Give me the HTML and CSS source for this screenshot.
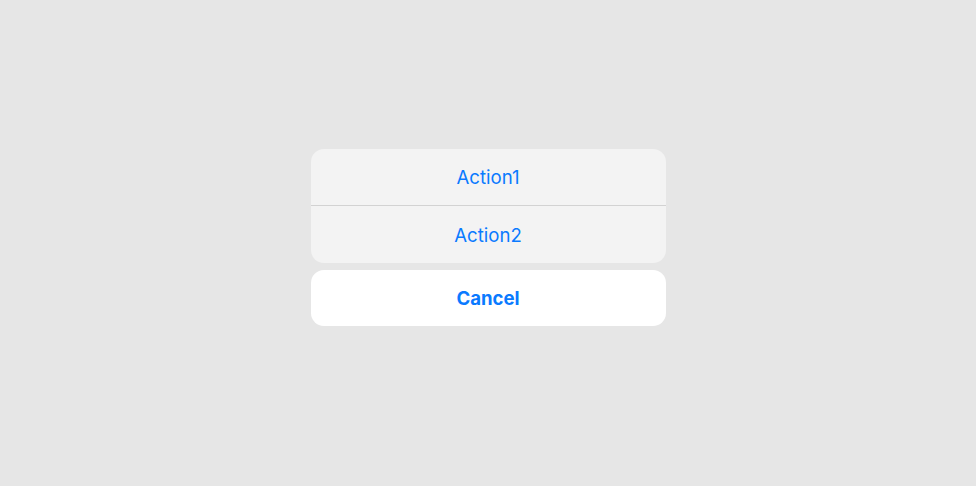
FILE: index.html
```html
<!DOCTYPE html>
<html lang="en">
<head>
    <meta charset="UTF-8">
    <meta name="viewport" content="width=device-width, initial-scale=1.0">
    <title>Action Sheet</title>
    <link rel="stylesheet" href="styles.css">
</head>
<body>
    <!-- Hoja de acciones -->
    <div class="sheet">
        <div class="action-group">
            <button class="action">Action1</button>
            <button class="action">Action2</button>
        </div>
        <button class="cancel">Cancel</button>
    </div>
</body>
</html>
```

FILE: styles.css
```css
body {
    margin: 0;
    height: 486px;
    background-color: #e6e6e6;
    font-family: Inter, 'Noto Sans', sans-serif;
}
.sheet {
    width: 355px;
    margin: 0 auto;
    padding-top: 149px;
    display: flex;
    flex-direction: column;
    gap: 7px;
}
.action-group {
    background: #f3f3f3;
    border-radius: 13px;
    overflow: hidden;
    display: flex;
    flex-direction: column;
}
.action, .cancel {
    height: 56px;
    border: none;
    background: transparent;
    color: #0a7aff;
    font-family: inherit;
    font-size: 18.6px;
    cursor: pointer;
}
.action + .action {
    height: 58px;
    border-top: 1px solid #d2d2d2;
}
.cancel {
    background: #fff;
    border-radius: 13px;
    font-weight: 700;
}
```
